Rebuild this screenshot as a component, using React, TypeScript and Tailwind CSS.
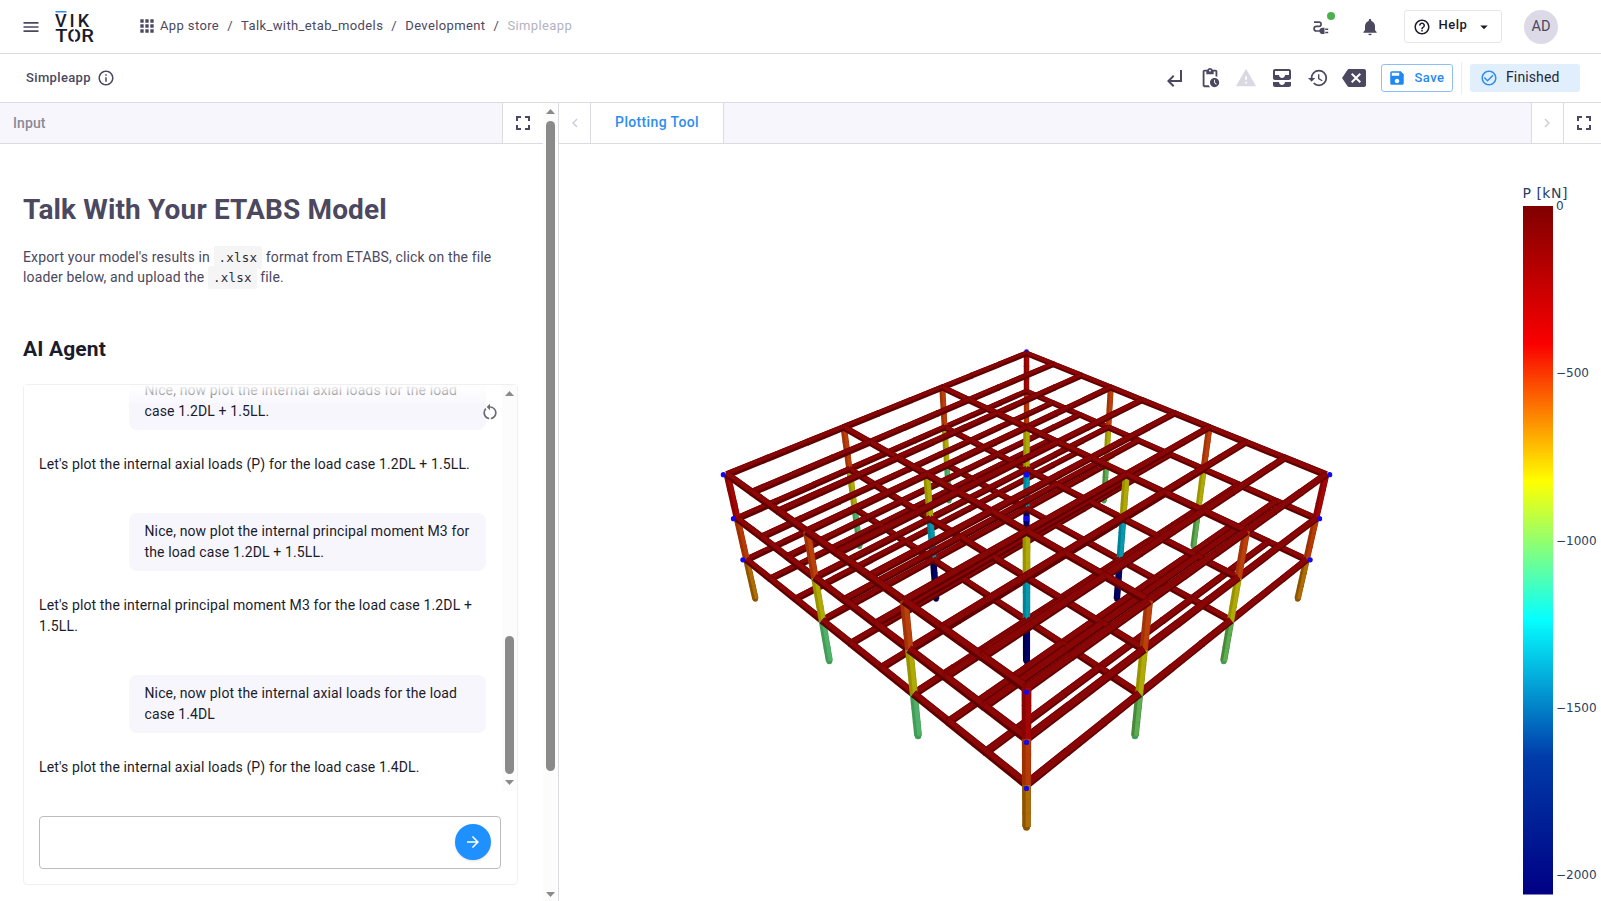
import React from "react";
import {
  MdMenu, MdApps, MdInfoOutline, MdFullscreen, MdChevronLeft, MdChevronRight, MdNotifications,
  MdHelpOutline, MdArrowDropDown, MdSubdirectoryArrowLeft, MdPendingActions, MdWarning, MdAllInbox,
  MdHistory, MdBackspace, MdSave, MdCheckCircleOutline, MdRestartAlt, MdArrowForward,
} from "react-icons/md";

/* ---------- 3D frame model ---------- */

type P3 = { x: number; y: number; w: number };

// u runs from the back corner to the right one, v from the back corner to the left one (0..3);
// level 0 is the roof, 3 the foundation.
function project(u: number, v: number, level: number, spread = 0.985): P3 {
  const d = (spread * (u + v - 3)) / 3;
  const b = (spread * (u - v)) / 3;
  const w = 1 - 0.2797 * d + 0.0345 * level;
  return { x: 1026.5 + (303.8 * b) / w, y: (474.7 + 24.26 * d + 61.9 * level) / w, w };
}

type Strip = { from: number; to: number; color: string };
type Shape = { depth: number; node: (key: number) => React.ReactElement };

function bar(a: P3, b: P3, size: number, strips: Strip[]): Shape {
  const len = Math.hypot(b.x - a.x, b.y - a.y) || 1;
  const tx = (b.x - a.x) / len;
  const ty = (b.y - a.y) / len;
  const nx = -ty;
  const ny = tx;
  const e = 0.5;
  const corner = (p: P3, f: number, s: number) => {
    const o = (size / p.w) * (f - 0.5);
    return `${(p.x + nx * o + tx * s).toFixed(2)},${(p.y + ny * o + ty * s).toFixed(2)}`;
  };
  return {
    depth: (a.w + b.w) / 2,
    node: (key) => (
      <g key={key}>
        {strips.map((s, i) => (
          <polygon
            key={i}
            fill={s.color}
            points={[corner(a, s.from, -e), corner(b, s.from, e), corner(b, s.to, e), corner(a, s.to, -e)].join(" ")}
          />
        ))}
      </g>
    ),
  };
}

// Strips go from the upper edge of a beam to its lower edge; the lit share grows towards the right.
const slashStrips = (u: number): Strip[] => [
  { from: 0, to: 1, color: "#5e0000" },
  { from: 0, to: 0.64 + 0.06 * u, color: "#760303" },
  { from: 0.1, to: 0.56 + 0.08 * u, color: "#880606" },
];
const backslashStrips: Strip[] = [
  { from: 0, to: 1, color: "#5c0000" },
  { from: 0, to: 0.7, color: "#7a0404" },
  { from: 0.1, to: 0.64, color: "#8d0707" },
];

const columnColors: Record<string, [string, string][]> = {
  corner: [["#860404", "#a40606"], ["#9c3000", "#b83a06"], ["#8c5400", "#b06c06"]],
  edge: [["#a03408", "#bc400a"], ["#989200", "#b0aa06"], ["#429c58", "#50b268"]],
  inner: [["#989200", "#b0aa06"], ["#008094", "#0698ac"], ["#000048", "#00006a"]],
};

function buildFrame(): Shape[] {
  const shapes: Shape[] = [];
  for (let level = 0; level < 3; level++) {
    for (let v = 0; v <= 3; v++)
      for (let k = 0; k < 9; k++)
        shapes.push(bar(project(k / 3, v, level), project((k + 1) / 3, v, level), 7.2, backslashStrips));
    for (let j = 0; j <= 9; j++)
      for (let k = 0; k < 9; k++)
        shapes.push(bar(project(j / 3, (k + 1) / 3, level), project(j / 3, k / 3, level), 7.2, slashStrips(j / 3)));
  }
  for (let u = 0; u <= 3; u++)
    for (let v = 0; v <= 3; v++) {
      const outer = (u % 3 === 0 ? 1 : 0) + (v % 3 === 0 ? 1 : 0);
      const kind = outer === 2 ? "corner" : outer === 1 ? "edge" : "inner";
      for (let s = 0; s < 3; s++) {
        let [dark, light] = columnColors[kind][s];
        if (kind === "edge" && s === 2 && u > v) [dark, light] = ["#47883a", "#5cae50"];
        for (let k = 0; k < 3; k++)
          shapes.push(
            bar(project(u, v, s + (k + 1) / 3), project(u, v, s + k / 3), 7.1, [
              { from: 0, to: 1, color: dark },
              { from: 0.4, to: 0.94, color: light },
            ])
          );
      }
      const foot = project(u, v, 3);
      shapes.push({
        depth: foot.w + 0.01,
        node: (key) => <circle key={key} cx={foot.x} cy={foot.y + 0.6} r={3 / foot.w} fill={columnColors[kind][2][0]} />,
      });
      if (outer === 2 && u + v !== 0) {
        for (let l = 0; l < 3; l++) {
          const p = project(u, v, l, 0.998);
          shapes.push({
            depth: p.w - 0.03,
            node: (key) => <circle key={key} cx={p.x} cy={p.y} r={2.6} fill="#1408e6" />,
          });
        }
      }
    }
  const back = project(0, 0, 0, 1);
  shapes.push({ depth: 9, node: (key) => <circle key={key} cx={back.x} cy={back.y - 0.3} r={2.4} fill="#1408e6" /> });
  for (let l = 0; l < 3; l++) {
    const c = project(1.5, 1.5, l, 1);
    shapes.push({ depth: c.w - 0.02, node: (key) => <circle key={key} cx={c.x} cy={c.y} r={2.9} fill="#1408e6" /> });
  }
  return shapes.sort((a, b) => b.depth - a.depth);
}

const frame = buildFrame();
const ticks = [
  { y: 206, label: "0" },
  { y: 373, label: "−500" },
  { y: 540.6, label: "−1000" },
  { y: 707.6, label: "−1500" },
  { y: 874.6, label: "−2000" },
];

function Plot() {
  return (
    <svg className="block h-[757px] w-[1042px]" viewBox="559 144 1042 757">
      <defs>
        <linearGradient id="jet" x1="0" y1="0" x2="0" y2="1">
          <stop offset="0" stopColor="rgb(128,0,0)" />
          <stop offset="0.2" stopColor="rgb(250,0,0)" />
          <stop offset="0.4" stopColor="rgb(255,255,0)" />
          <stop offset="0.6" stopColor="rgb(5,255,255)" />
          <stop offset="0.8" stopColor="rgb(0,60,170)" />
          <stop offset="1" stopColor="rgb(0,0,131)" />
        </linearGradient>
      </defs>
      {frame.map((s, i) => s.node(i))}
      <rect x="1523" y="206" width="30" height="688.5" fill="url(#jet)" />
      <g fill="#2a3f5f" fontFamily="'DejaVu Sans', sans-serif">
        <text x="1522.5" y="197.5" fontSize="14" letterSpacing="0.5">P [kN]</text>
        {ticks.map((t) => (
          <text key={t.label} x="1556" y={t.y + 4.2} fontSize="12">{t.label}</text>
        ))}
      </g>
    </svg>
  );
}

/* ---------- Small pieces ---------- */

function Logo() {
  return (
    <svg className="h-[32px] w-[40px] overflow-visible" viewBox="0 0 40 32" fontFamily="Roboto, sans-serif" fontWeight="500" fill="#1b1c2b">
      <rect x="0.5" y="0" width="11" height="1.5" fill="#2e8df0" />
      <text x="0" y="16" fontSize="18" textLength="34" lengthAdjust="spacing">VIK</text>
      <text x="0.3" y="31" fontSize="17.5" textLength="38.5" lengthAdjust="spacingAndGlyphs">TOR</text>
      <rect x="18.6" y="17.5" width="1.5" height="14.5" fill="#fff" />
    </svg>
  );
}

function PlugIcon() {
  return (
    <svg className="h-5 w-5" viewBox="0 0 20 20" fill="none">
      <path d="M3 5.2H8a2 2 0 0 1 0 4.2H5.4a2.3 2.3 0 0 0 0 4.6H8.5" stroke="#4b4860" strokeWidth="1.7" />
      <path d="M8 13.9c.7-2.1 1.8-3.1 3.6-3.1h1.9v6.2h-1.9c-1.8 0-2.9-1-3.6-3.1z" fill="#4b4860" />
      <path d="M14.2 12.2h3M14.2 15.6h3" stroke="#4b4860" strokeWidth="1.5" />
    </svg>
  );
}

function Triangle({ down = false }: { down?: boolean }) {
  return (
    <svg className="h-[5px] w-[9px]" viewBox="0 0 9 5" fill="#8a8a8a">
      <path d={down ? "M0 0h9L4.5 5z" : "M0 5h9L4.5 0z"} />
    </svg>
  );
}

function Crumb({ children }: { children: React.ReactNode }) {
  return (
    <>
      <span>{children}</span>
      <span className="w-[22px] text-center">/</span>
    </>
  );
}

function Bubble({ children }: { children: React.ReactNode }) {
  return (
    <div className="mb-[23.5px] ml-[90px] w-[357px] shrink-0 rounded-[8px] bg-[#f7f6fd] py-2 pl-[15.5px] pr-1">{children}</div>
  );
}

function Code({ children }: { children: React.ReactNode }) {
  return (
    <code className="rounded-[2px] bg-[#f5f5f6] px-[5px] py-[4px] font-['DejaVu_Sans_Mono','Liberation_Mono',monospace] text-[12.5px] leading-[0] tracking-[0.2px] text-[#2c2c3a]">
      {children}
    </code>
  );
}

/* ---------- Page ---------- */

export default function App() {
  return (
    <div className="flex h-[901px] w-[1601px] flex-col overflow-hidden bg-white font-[Roboto,sans-serif] text-[14px] text-[#4b4860]">
      <header className="flex h-[54px] shrink-0 items-center border-b border-[#dcdce0] pl-[21px] pr-[43px]">
        <MdMenu className="h-5 w-5" />
        <div className="ml-[14px]"><Logo /></div>
        <nav className="ml-[42px] flex items-center pb-[2px] text-[13px] tracking-[0.375px]">
          <MdApps className="mr-[3px] mt-[1px] h-5 w-5" />
          <Crumb>App store</Crumb>
          <Crumb>Talk_with_etab_models</Crumb>
          <Crumb>Development</Crumb>
          <span className="text-[#b4b3c2]">Simpleapp</span>
        </nav>
        <div className="ml-auto flex items-center">
          <div className="relative">
            <PlugIcon />
            <span className="absolute -top-[5px] left-[16px] h-2 w-2 rounded-full bg-[#4caf50]" />
          </div>
          <MdNotifications className="ml-[29px] h-5 w-5" />
          <button className="ml-[24px] flex h-[33px] w-[98px] items-center rounded-[3px] border border-[#e6e6ea] pl-[8px] text-[13px] font-medium tracking-[0.5px] text-[#1b1c2b]">
            <MdHelpOutline className="h-[18px] w-[18px]" />
            <span className="ml-[7.5px] pb-[3px]">Help</span>
            <MdArrowDropDown className="ml-[8px] h-[18px] w-[18px]" />
          </button>
          <div className="ml-[22px] flex h-[34px] w-[34px] items-center justify-center rounded-full bg-[#dbdae6] text-[14.5px]">AD</div>
        </div>
      </header>

      <div className="flex h-[49px] shrink-0 items-center border-b border-[#dcdce0] pl-[26px] pr-[21px]">
        <span className="text-[13px] font-medium tracking-[0.36px]">Simpleapp</span>
        <MdInfoOutline className="ml-[6px] h-[18px] w-[18px]" />
        <div className="ml-auto flex items-center">
          <MdSubdirectoryArrowLeft className="h-6 w-6" />
          <MdPendingActions className="ml-[13px] h-[22px] w-[22px]" />
          <MdWarning className="ml-[14px] h-[22px] w-[22px] text-[#d9d8e3]" />
          <MdAllInbox className="ml-[13px] h-6 w-6" />
          <MdHistory className="ml-[13px] h-[22px] w-[22px]" />
          <MdBackspace className="ml-[13px] h-6 w-6" />
          <button className="ml-[15px] flex h-7 w-[72px] items-center rounded-[3px] border border-[#8cc0f5] pl-[6px] text-[13px] font-medium tracking-[0.45px] text-[#1e88f5]">
            <MdSave className="h-[18px] w-[18px]" />
            <span className="ml-[8.5px]">Save</span>
          </button>
          <span className="ml-[8px] h-8 w-px bg-[#ececf0]" />
          <div className="ml-[8px] flex h-7 w-[110px] items-center rounded-[3px] bg-[#e1effc] pl-[10px] text-[#26263a]">
            <MdCheckCircleOutline className="h-[18px] w-[18px] text-[#2e8df0]" />
            <span className="ml-[8px] pb-px tracking-[0.12px]">Finished</span>
          </div>
        </div>
      </div>

      <div className="flex min-h-0 flex-1">
        <section className="flex w-[543px] shrink-0 flex-col">
          <div className="flex h-[41px] shrink-0 border-b border-[#dcdce0]">
            <div className="flex flex-1 items-center bg-[#f7f6fd] pl-[13px] font-medium tracking-[0.1px] text-[#8b8a94]">Input</div>
            <div className="flex w-[41px] items-center justify-center border-l border-[#dcdce0]">
              <MdFullscreen className="h-6 w-6" />
            </div>
          </div>
          <h1 className="ml-[23px] mt-[48px] text-[28px] font-bold leading-[36px] tracking-[0.14px]">Talk With Your ETABS Model</h1>
          <p className="ml-[23px] mt-[18.5px] w-[500px] leading-[20px] tracking-[0.14px]">
            Export your model's results in <Code>.xlsx</Code> format from ETABS, click on the file
            <br />
            loader below, and upload the <Code>.xlsx</Code> file.
          </p>
          <h2 className="ml-[23px] mt-[46px] text-[21px] font-bold leading-[32px] tracking-[0.15px] text-[#1b1c2b]">AI Agent</h2>
          <div className="ml-[23px] mt-[19px] flex h-[501px] w-[495px] shrink-0 flex-col rounded-[4px] border border-[#f0f0f3]">
            <div className="flex h-[406px] shrink-0">
              <div className="relative flex h-full flex-1 flex-col justify-end overflow-hidden pb-[13px] pl-[15px] leading-[21px] tracking-[0.128px] text-[#1b1c2b]">
                <Bubble>Nice, now plot the internal axial loads for the load<br />case 1.2DL + 1.5LL.</Bubble>
                <p className="mb-[38.5px] shrink-0">Let's plot the internal axial loads (P) for the load case 1.2DL + 1.5LL.</p>
                <Bubble>Nice, now plot the internal principal moment M3 for<br />the load case 1.2DL + 1.5LL.</Bubble>
                <p className="mb-[38.5px] shrink-0">Let's plot the internal principal moment M3 for the load case 1.2DL +<br />1.5LL.</p>
                <Bubble>Nice, now plot the internal axial loads for the load<br />case 1.4DL</Bubble>
                <p className="shrink-0">Let's plot the internal axial loads (P) for the load case 1.4DL.</p>
                <div className="absolute left-0 top-0 h-[18px] w-full bg-linear-to-b from-white to-white/20" />
                <MdRestartAlt className="absolute left-[456px] top-[17px] h-5 w-5 text-[#6b6b75]" />
              </div>
              <div className="flex w-[15px] shrink-0 flex-col items-center bg-[#fcfcfd] pb-[6px] pt-[6px]">
                <Triangle />
                <div className="mt-auto h-[138px] w-[9px] rounded-full bg-[#8a8a8a]" />
                <div className="mt-[6px] flex"><Triangle down /></div>
              </div>
            </div>
            <div className="ml-[15px] mt-[25px] flex h-[53px] w-[462px] items-center justify-end rounded-[4px] border border-[#bcbcc0] pr-[9px]">
              <div className="flex h-9 w-9 items-center justify-center rounded-full bg-[#1e90ff] text-white shadow">
                <MdArrowForward className="h-[18px] w-[18px]" />
              </div>
            </div>
          </div>
        </section>

        <div className="flex w-[16px] shrink-0 flex-col items-center border-r border-[#dcdce0] bg-[#fcfcfd] pb-[4px] pt-[6px]">
          <Triangle />
          <div className="mt-[7px] h-[650px] w-[9px] rounded-full bg-[#8a8a8a]" />
          <div className="mt-auto flex"><Triangle down /></div>
        </div>

        <section className="flex min-w-0 flex-1 flex-col">
          <div className="flex h-[41px] shrink-0 border-b border-[#dcdce0] bg-[#f7f6fd]">
            <div className="flex w-[32px] items-center justify-center border-r border-[#dcdce0] bg-white text-[#cfced8]">
              <MdChevronLeft className="h-[18px] w-[18px]" />
            </div>
            <div className="flex w-[133px] items-center justify-center border-r border-[#dcdce0] bg-white pb-[2px] font-medium tracking-[0.35px] text-[#2e8df0]">
              Plotting Tool
            </div>
            <div className="ml-auto flex w-[32px] items-center justify-center border-l border-[#dcdce0] bg-white pr-px text-[#cfced8]">
              <MdChevronRight className="h-[18px] w-[18px]" />
            </div>
            <div className="flex w-[38px] items-center justify-center border-l border-[#dcdce0] bg-white pl-[2px]">
              <MdFullscreen className="h-6 w-6" />
            </div>
          </div>
          <Plot />
        </section>
      </div>
    </div>
  );
}
